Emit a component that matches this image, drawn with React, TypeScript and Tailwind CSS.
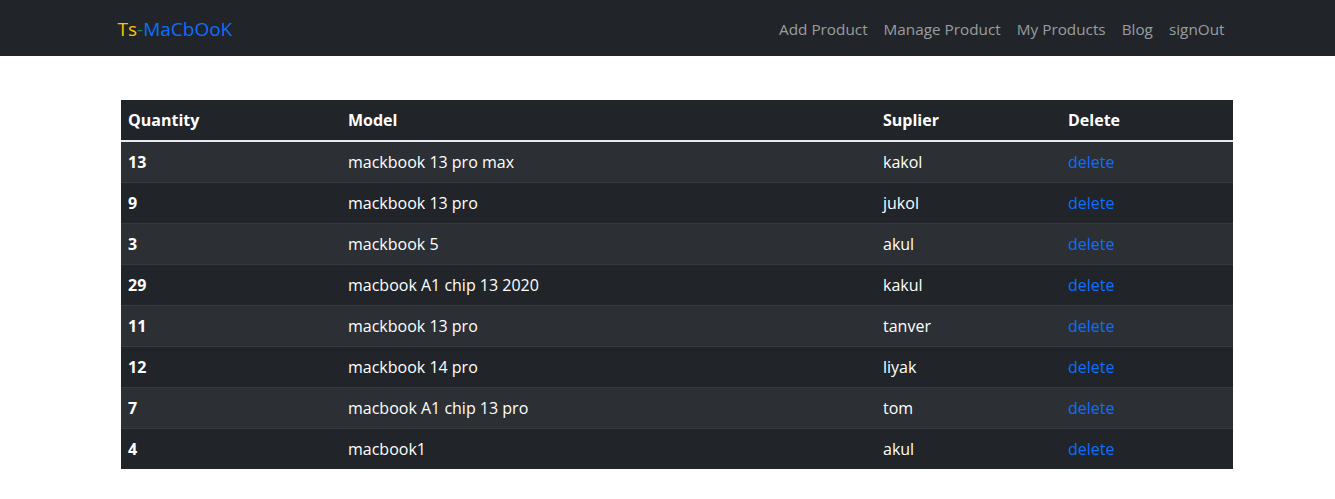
const products = [
  { qty: 13, model: "mackbook 13 pro max", supplier: "kakol" },
  { qty: 9, model: "mackbook 13 pro", supplier: "jukol" },
  { qty: 3, model: "mackbook 5", supplier: "akul" },
  { qty: 29, model: "macbook A1 chip 13 2020", supplier: "kakul" },
  { qty: 11, model: "mackbook 13 pro", supplier: "tanver" },
  { qty: 12, model: "mackbook 14 pro", supplier: "liyak" },
  { qty: 7, model: "macbook A1 chip 13 pro", supplier: "tom" },
  { qty: 4, model: "macbook1", supplier: "akul" },
];

const links = ["Add Product", "Manage Product", "My Products", "Blog", "signOut"];

export default function App() {
  return (
    <div className="min-h-[499px] bg-white font-['Open_Sans',sans-serif] text-[16px]">
      <nav className="h-14 bg-[#212529]">
        <div className="mx-auto flex h-full w-[1140px] items-center justify-between pt-[2px] pl-[20px] pr-[5px]">
          <a className="text-[19px] leading-none">
            <span className="text-[#ffc107]">Ts</span>
            <span className="text-[#198754]">-</span>
            <span className="text-[#0d6efd]">MaCbOoK</span>
          </a>
          <ul className="flex text-[15.3px]">
            {links.map((l) => (
              <li key={l} className="px-2 text-[#9a9da0]">
                {l}
              </li>
            ))}
          </ul>
        </div>
      </nav>

      <div className="mt-11 pl-[121px]">
        <table className="w-[1112px] table-fixed border-collapse text-white">
          <colgroup>
            <col className="w-[220px]" />
            <col className="w-[535px]" />
            <col className="w-[185px]" />
            <col />
          </colgroup>
          <thead>
            <tr className="h-[41px] border-b-2 border-[#e9ecef] bg-[#212529] text-left font-bold">
              <th className="pl-[7px] pr-2">Quantity</th>
              <th className="pl-[7px] pr-2">Model</th>
              <th className="pl-[7px] pr-2">Suplier</th>
              <th className="pl-[7px] pr-2">Delete</th>
            </tr>
          </thead>
          <tbody>
            {products.map((p, i) => (
              <tr
                key={i}
                className={`h-[41px] border-b border-[#373b3e] last:border-b-0 ${
                  i % 2 === 0 ? "bg-[#2c3034]" : "bg-[#212529]"
                }`}
              >
                <td className="pl-[7px] pr-2 font-bold">{p.qty}</td>
                <td className="pl-[7px] pr-2">{p.model}</td>
                <td className="pl-[7px] pr-2">{p.supplier}</td>
                <td className="pl-[7px] pr-2">
                  <a className="text-[#0d6efd]">delete</a>
                </td>
              </tr>
            ))}
          </tbody>
        </table>
      </div>
    </div>
  );
}
